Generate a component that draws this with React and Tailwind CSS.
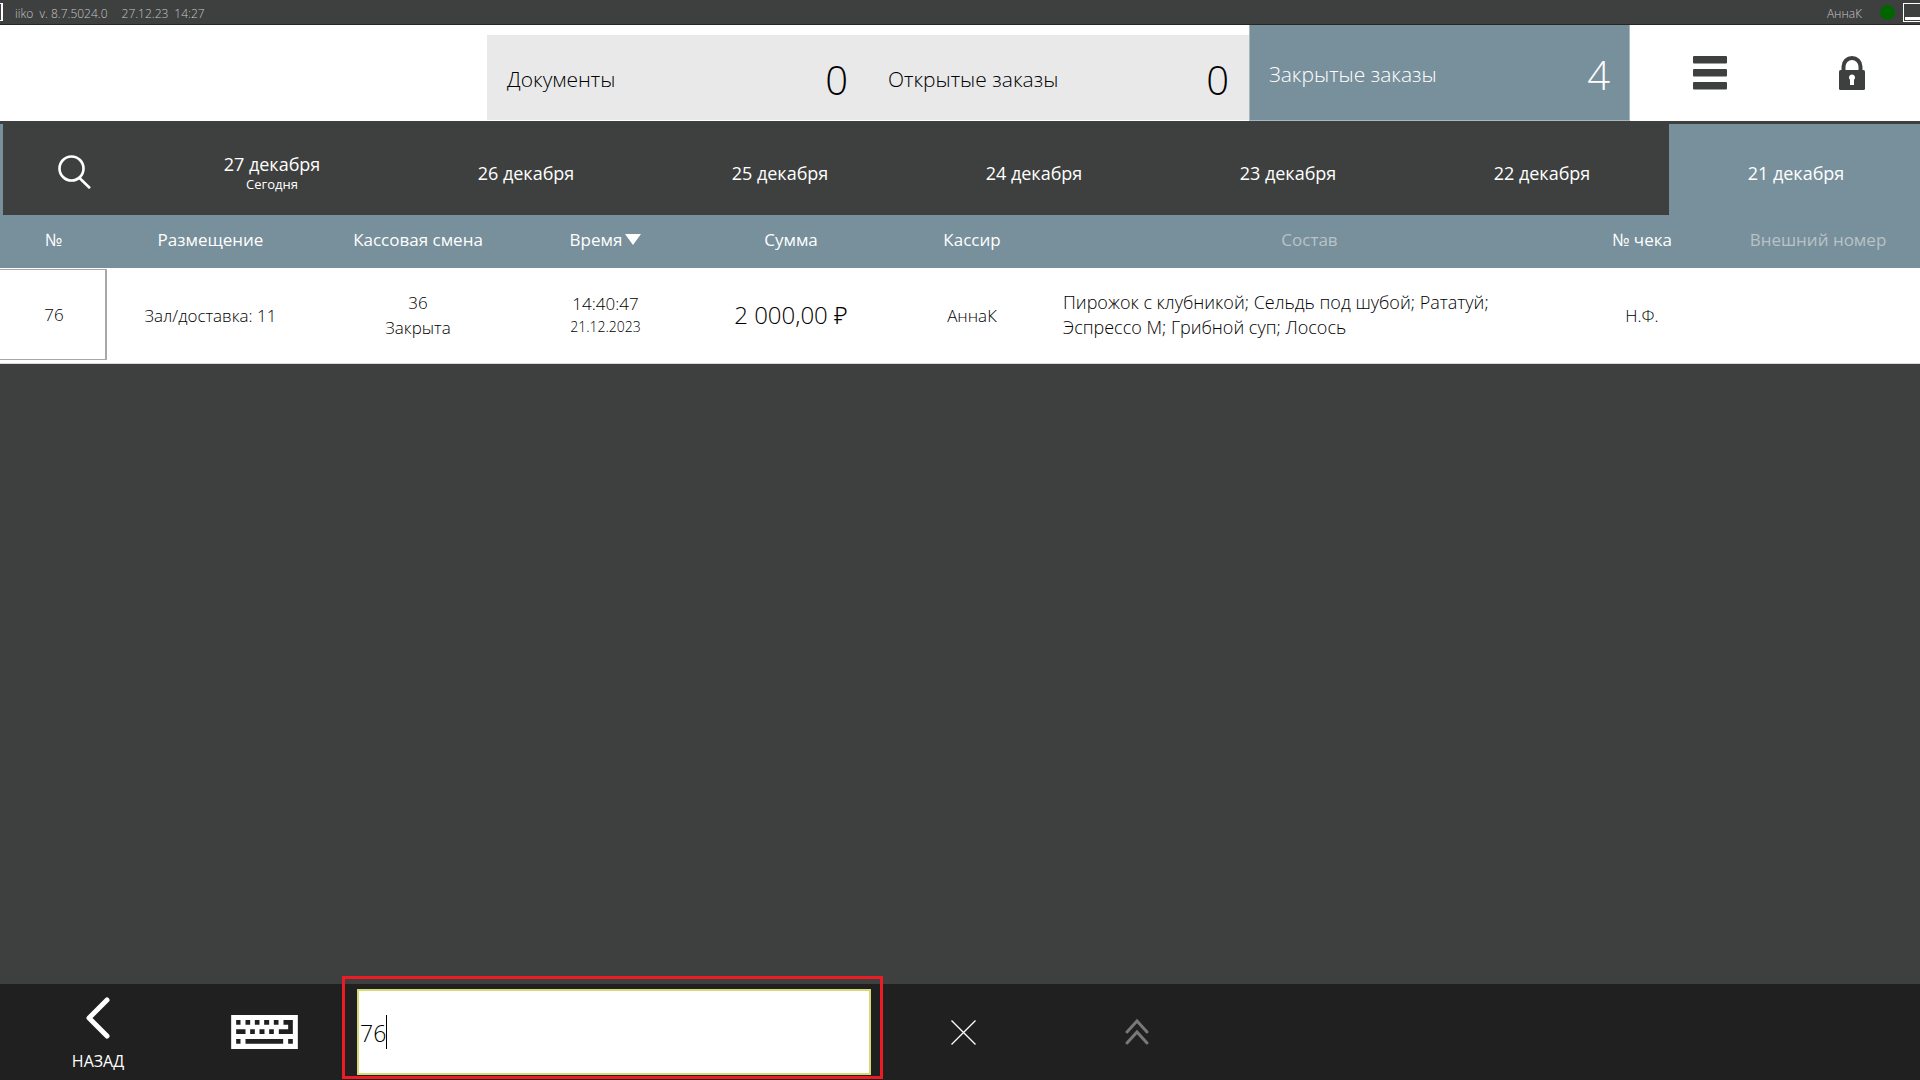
import React from "react";

const orderTabs = [
  { label: "Документы", count: 0, active: false },
  { label: "Открытые заказы", count: 0, active: false },
  { label: "Закрытые заказы", count: 4, active: true },
];

const days = [
  { date: "27 декабря", note: "Сегодня" },
  { date: "26 декабря" },
  { date: "25 декабря" },
  { date: "24 декабря" },
  { date: "23 декабря" },
  { date: "22 декабря" },
  { date: "21 декабря", active: true },
];

const columns = [
  { title: "№", width: "w-[107px]" },
  { title: "Размещение", width: "w-[207px]" },
  { title: "Кассовая смена", width: "w-[208px]" },
  { title: "Время", width: "w-[167px]", sorted: true },
  { title: "Сумма", width: "w-[204px]" },
  { title: "Кассир", width: "w-[158px]" },
  { title: "Состав", width: "w-auto", muted: true },
  { title: "№ чека", width: "w-[148px]" },
  { title: "Внешний номер", width: "w-[204px]", muted: true },
];

function SearchIcon() {
  return (
    <svg width="33" height="34" viewBox="0 0 33 34" fill="none" stroke="#fff" strokeWidth="2.6" aria-hidden="true">
      <circle cx="13.5" cy="13.5" r="12" />
      <path d="M21.5 23 32 33.2" />
    </svg>
  );
}

function MenuIcon() {
  return (
    <svg width="34" height="34" viewBox="0 0 34 34" fill="#3e403f" aria-hidden="true">
      <rect y="0" width="34" height="7.6" rx="1" />
      <rect y="13" width="34" height="7.6" rx="1" />
      <rect y="26" width="34" height="7.6" rx="1" />
    </svg>
  );
}

function LockIcon() {
  return (
    <svg width="26" height="34" viewBox="0 0 26 34" aria-hidden="true">
      <path d="M4.500 15V10.500a8.500 8.500 0 0 1 17 0V15" fill="none" stroke="#3e403f" strokeWidth="4" />
      <rect y="14" width="26" height="20" rx="1.500" fill="#3e403f" />
      <path d="M13 18.500a3 3 0 0 1 2 5.300V29h-4v-5.200a3 3 0 0 1 2-5.300z" fill="#fff" />
    </svg>
  );
}

function KeyboardIcon() {
  return (
    <svg width="67" height="34" viewBox="0 0 200 102" aria-hidden="true">
      <rect width="200" height="102" fill="#fff" />
      <path
        fill="#202020"
        d="M15 15h13v14H15zM43 15h14v14H43zM71 15h14v14H71zM99 15h15v14H99zM128 15h14v14h-14zM157 15h28v42h-42V43h28V29h-14zM15 43h28v14H15zM57 43h14v14H57zM85 43h15v14H85zM114 43h14v14h-14zM15 72h13v14H15zM43 72h113v14H43zM171 72h14v14h-14z"
      />
    </svg>
  );
}

function StatusBar() {
  return (
    <header className="flex h-[25px] items-center justify-between border-b border-[#262626] bg-[#3e403f] text-xs font-light text-[#c4c4c4]">
      <div className="flex items-center">
        <span className="mr-3 h-[18px] w-[3px] border-y border-r-2 border-white" />
        <span className="mr-[14px] pt-[3px] whitespace-pre">iiko  v. 8.7.5024.0</span>
        <span className="mr-[6px] pt-[3px]">27.12.23</span>
        <span className="pt-[3px]">14:27</span>
      </div>
      <div className="flex items-center">
        <span className="mr-[18px] pt-[3px]">АннаК</span>
        <span className="mr-[8px] h-[15px] w-[15px] rounded-full bg-[#006400]" />
        <button type="button" aria-label="Свернуть" className="flex h-[19px] w-[17px] items-end border border-r-0 border-white pb-px pl-px">
          <span className="h-[3px] w-full bg-white" />
        </button>
      </div>
    </header>
  );
}

function OrderTabs() {
  return (
    <nav className="flex h-[96px] justify-end overflow-hidden bg-white">
      {orderTabs.map((tab) => (
        <button
          type="button"
          key={tab.label}
          className={
            tab.active
              ? "flex w-[381px] items-center justify-between border border-t-0 border-[#a9b8c0] bg-[#78909c] px-[19px] pt-1 font-light text-white"
              : "mt-[10px] mb-px flex w-[381px] items-center justify-between bg-[#e9e9e9] px-5 pt-1 font-light text-black"
          }
        >
          <span className="text-[21px]">{tab.label}</span>
          <span className="text-[40px] leading-none">{tab.count}</span>
        </button>
      ))}
      <div className="-mr-[3px] flex pl-[9px]">
        <button type="button" aria-label="Меню" className="flex w-[142px] items-center justify-center">
          <MenuIcon />
        </button>
        <button type="button" aria-label="Заблокировать" className="flex w-[142px] items-center justify-center">
          <LockIcon />
        </button>
      </div>
    </nav>
  );
}

function DayTabs() {
  return (
    <nav className="overflow-hidden bg-[#3e403f] pt-[3px]">
      <div className="-mr-[3px] flex h-[91px] border-l-[3px] border-[#78909c]">
        <button type="button" aria-label="Поиск" className="flex w-[142px] items-center justify-center pt-1">
          <SearchIcon />
        </button>
        {days.map((day) => (
          <button
            type="button"
            key={day.date}
            className={
              day.active
                ? "flex flex-1 flex-col items-center justify-center bg-[#78909c] pt-[6px] text-white"
                : "flex flex-1 flex-col items-center justify-center pt-[6px] text-white"
            }
          >
            <span className="text-lg leading-6">{day.date}</span>
            {day.note && <span className="text-[13px] leading-[17px]">{day.note}</span>}
          </button>
        ))}
      </div>
    </nav>
  );
}

function OrdersTable() {
  return (
    <table className="w-full table-fixed border-collapse text-[17px]">
      <thead>
        <tr className="h-[53px] bg-[#78909c] text-white">
          {columns.map((col) => (
            <th
              key={col.title}
              scope="col"
              className={`${col.width} p-0 pb-[3px] text-center font-normal ${col.muted ? "text-[#b9c2c6]" : ""}`}
            >
              {col.sorted ? (
                <button type="button" className="inline-flex items-center gap-[3px]">
                  {col.title}
                  <svg width="16" height="11" viewBox="0 0 16 11" fill="#fff" className="mb-px" aria-hidden="true">
                    <path d="M0 0h16L8 11z" />
                  </svg>
                </button>
              ) : (
                col.title
              )}
            </th>
          ))}
        </tr>
      </thead>
      <tbody>
        <tr className="h-[95px] border-b border-[#d8d8d8] bg-white text-center font-light text-black">
          <td className="p-0 pb-[2px]">
            <div className="flex h-[91px] items-center justify-center border border-r-2 border-l-0 border-[#a8a8a8] pt-px pl-[3px]">76</div>
          </td>
          <td className="p-0">Зал/доставка: 11</td>
          <td className="p-0 leading-[25px]">
            <div>36</div>
            <div>Закрыта</div>
          </td>
          <td className="p-0">
            <div className="leading-6">14:40:47</div>
            <div className="text-sm leading-[22px]">21.12.2023</div>
          </td>
          <td className="p-0 text-2xl">2 000,00 ₽</td>
          <td className="p-0">АннаК</td>
          <td className="p-0 px-3 text-left text-lg leading-[25px]">
            <div>Пирожок с клубникой; Сельдь под шубой; Рататуй;</div>
            <div>Эспрессо М; Грибной суп; Лосось</div>
          </td>
          <td className="p-0">Н.Ф.</td>
          <td className="p-0"></td>
        </tr>
      </tbody>
    </table>
  );
}

function SearchFooter() {
  return (
    <footer className="flex h-[96px] items-center bg-[#202020]">
      <button type="button" className="flex h-full w-[196px] flex-col items-center gap-[11px] pt-3 text-white">
        <svg width="26" height="44" viewBox="0 0 26 44" fill="none" stroke="#fff" strokeWidth="5" strokeLinecap="round" strokeLinejoin="round" aria-hidden="true">
          <path d="M22 4 4 22l18 18" />
        </svg>
        <span className="text-base leading-5">НАЗАД</span>
      </button>
      <button type="button" aria-label="Клавиатура" className="flex h-full w-[137px] items-center justify-center">
        <KeyboardIcon />
      </button>
      <div className="relative ml-6 h-[86px] w-[514px]">
        <input
          type="text"
          aria-label="Поиск заказа"
          defaultValue="76"
          className="h-full w-full border-2 border-[#d8d878] bg-white px-px pt-[2px] text-[23px] font-light text-black outline-none"
        />
        <span className="pointer-events-none absolute top-[26px] left-[29px] h-[34px] w-px bg-black" />
        <span className="pointer-events-none absolute -top-[13px] -right-[12px] -bottom-[4px] -left-[15px] border-[3px] border-[#ed1c24]" />
      </div>
      <button type="button" aria-label="Очистить" className="ml-[6px] flex h-full w-[172px] items-center justify-center">
        <svg width="25" height="25" viewBox="0 0 25 25" fill="none" stroke="#fff" strokeWidth="1.300" aria-hidden="true">
          <path d="M.5.5l24 24M24.500.5l-24 24" />
        </svg>
      </button>
      <button type="button" aria-label="В начало" className="flex h-full w-[176px] items-center justify-center">
        <svg width="24" height="26" viewBox="0 0 24 26" fill="none" stroke="#787878" strokeWidth="3" strokeLinecap="round" aria-hidden="true">
          <path d="M2 13 12 2l10 11M2 24l10-11 10 11" />
        </svg>
      </button>
    </footer>
  );
}

export default function App() {
  return (
    <div className="flex min-h-screen flex-col bg-[#3e403f] font-['Open_Sans','Noto_Sans',sans-serif]">
      <StatusBar />
      <OrderTabs />
      <DayTabs />
      <main className="flex-1">
        <OrdersTable />
      </main>
      <SearchFooter />
    </div>
  );
}
